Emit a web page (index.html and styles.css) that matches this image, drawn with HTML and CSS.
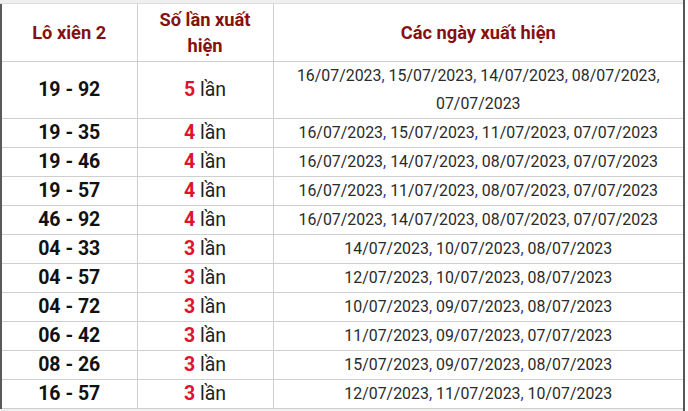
FILE: index.html
```html
<!DOCTYPE html>
<html lang="vi">
<head>
<meta charset="utf-8">
<link rel="stylesheet" href="styles.css">
</head>
<body>
<div class="frame">
  <div class="topband"></div>
  <table class="xien">
    <colgroup><col class="c1"><col class="c2"><col class="c3"></colgroup>
    <thead>
      <tr><th>Lô xiên 2</th><th>Số lần xuất<br>hiện</th><th>Các ngày xuất hiện</th></tr>
    </thead>
    <tbody>
      <tr class="tall"><td class="pair">19 - 92</td><td class="cnt"><b>5</b> lần</td><td class="dates">16/07/2023<i>,</i> 15/07/2023<i>,</i> 14/07/2023<i>,</i> 08/07/2023<i>,</i><br>07/07/2023</td></tr>
      <tr><td class="pair">19 - 35</td><td class="cnt"><b>4</b> lần</td><td class="dates">16/07/2023<i>,</i> 15/07/2023<i>,</i> 11/07/2023<i>,</i> 07/07/2023</td></tr>
      <tr><td class="pair">19 - 46</td><td class="cnt"><b>4</b> lần</td><td class="dates">16/07/2023<i>,</i> 14/07/2023<i>,</i> 08/07/2023<i>,</i> 07/07/2023</td></tr>
      <tr><td class="pair">19 - 57</td><td class="cnt"><b>4</b> lần</td><td class="dates">16/07/2023<i>,</i> 11/07/2023<i>,</i> 08/07/2023<i>,</i> 07/07/2023</td></tr>
      <tr><td class="pair">46 - 92</td><td class="cnt"><b>4</b> lần</td><td class="dates">16/07/2023<i>,</i> 14/07/2023<i>,</i> 08/07/2023<i>,</i> 07/07/2023</td></tr>
      <tr><td class="pair">04 - 33</td><td class="cnt"><b>3</b> lần</td><td class="dates">14/07/2023<i>,</i> 10/07/2023<i>,</i> 08/07/2023</td></tr>
      <tr><td class="pair">04 - 57</td><td class="cnt"><b>3</b> lần</td><td class="dates">12/07/2023<i>,</i> 10/07/2023<i>,</i> 08/07/2023</td></tr>
      <tr><td class="pair">04 - 72</td><td class="cnt"><b>3</b> lần</td><td class="dates">10/07/2023<i>,</i> 09/07/2023<i>,</i> 08/07/2023</td></tr>
      <tr><td class="pair">06 - 42</td><td class="cnt"><b>3</b> lần</td><td class="dates">11/07/2023<i>,</i> 09/07/2023<i>,</i> 07/07/2023</td></tr>
      <tr><td class="pair">08 - 26</td><td class="cnt"><b>3</b> lần</td><td class="dates">15/07/2023<i>,</i> 09/07/2023<i>,</i> 08/07/2023</td></tr>
      <tr><td class="pair">16 - 57</td><td class="cnt"><b>3</b> lần</td><td class="dates">12/07/2023<i>,</i> 11/07/2023<i>,</i> 10/07/2023</td></tr>
    </tbody>
  </table>
  <div class="bottomband"></div>
</div>
</body>
</html>
```
FILE: styles.css
```css
html, body {
  margin: 0;
  padding: 0;
  background: #fff;
}
body {
  font-family: Roboto, "Liberation Sans", sans-serif;
  color: #222;
}
.frame {
  width: 685px;
  height: 411px;
  overflow: hidden;
  border-right: 2px solid #555;
  box-sizing: border-box;
  background: #fff;
}
.topband {
  height: 4px;
  background: #efefef;
  border-bottom: 1px solid #dcdcdc;
  box-sizing: border-box;
}
.bottomband {
  height: 4px;
  background: #efefef;
}
.xien {
  width: 683px;
  border-collapse: collapse;
  border-left: 2px solid #5a5a5a;
  table-layout: fixed;
}
.c1 { width: 136px; }
.c2 { width: 136px; }
.c3 { width: auto; }
.xien th, .xien td {
  border: 1px solid #cfcfcf;
  text-align: center;
  vertical-align: middle;
  padding: 0;
}
.xien tr:first-child th { border-top: none; }
.xien th:first-child, .xien td:first-child { border-left: none; }
.xien th:last-child, .xien td:last-child { border-right: none; }
.xien th {
  height: 57px;
  font-size: 18.3px;
  font-weight: bold;
  color: #861010;
  line-height: 26px;
}
.xien td {
  height: 28px;
  line-height: 28px;
}
.xien tr.tall td { height: 55px; }
.pair {
  font-size: 19.5px;
  font-weight: bold;
  color: #111;
}
.cnt {
  font-size: 19.5px;
  color: #222;
}
.cnt b {
  color: #e0132b;
  font-weight: bold;
}
.dates {
  font-size: 15.9px;
  color: #2a2a2a;
}
.dates i {
  font-style: normal;
  color: #2e33a0;
}
```
